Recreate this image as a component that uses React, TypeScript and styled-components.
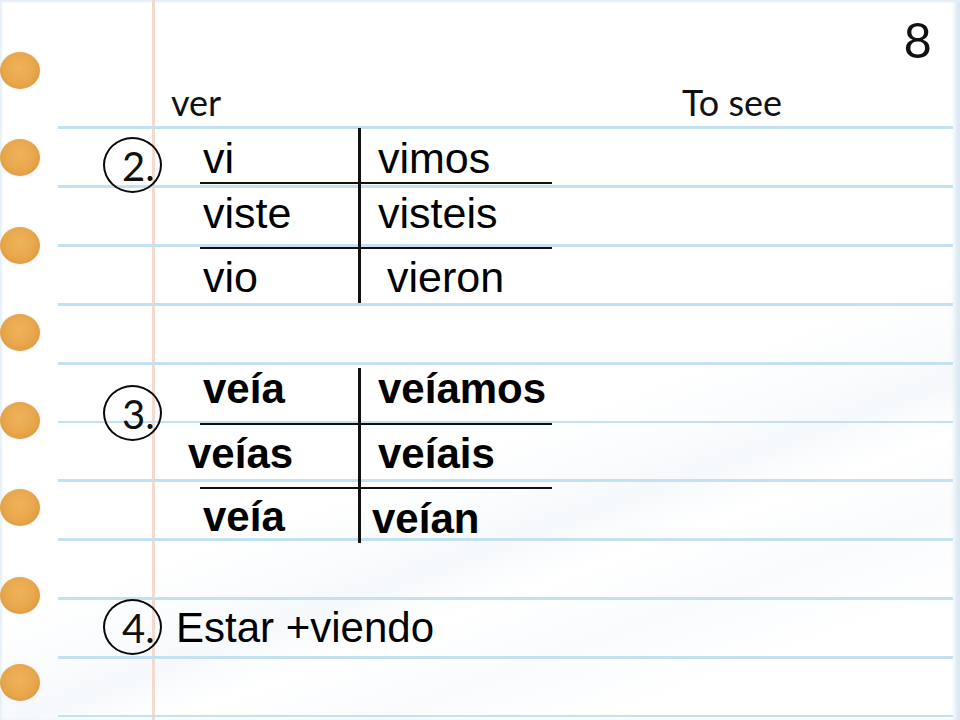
import React from "react";
import styled, { createGlobalStyle } from "styled-components";

const GlobalStyle = createGlobalStyle`
  html, body { margin: 0; padding: 0; background: #ffffff; }
  * { box-sizing: border-box; }
`;

const Page = styled.div`
  width: 960px;
  height: 720px;
  overflow: hidden;
  display: flex;
  background:
    linear-gradient(160deg, rgba(255,255,255,0) 58%, rgba(232,240,246,0.4) 68%, rgba(255,255,255,0) 73%, rgba(234,241,247,0.3) 80%, rgba(255,255,255,0) 88%),
    #ffffff;
  box-shadow: inset 0 3px 2px -1px #e4eef6, inset -7px 0 5px -2px #d9e8f2, inset 3px 0 2px -1px #e8f1f8;
`;

const Binding = styled.div`
  width: 58px;
  flex-shrink: 0;
  display: flex;
  flex-direction: column;
  padding-top: 51.5px;
  gap: 50.5px;
`;

const Ring = styled.div`
  width: 40px;
  height: 37px;
  border-radius: 50%;
  background: radial-gradient(ellipse at 48% 42%, #eeb35c 0%, #e8a64b 55%, #d7933d 88%, #cf8a36 100%);
  box-shadow: 0 0 3px 1px rgba(235, 244, 250, 0.9);
`;

const Sheet = styled.div`
  flex: 1;
  margin-right: 7px;
  display: flex;
  flex-direction: column;
  background: linear-gradient(
    to right,
    transparent 0,
    transparent 94px,
    #f6d9cd 94px,
    #f6d9cd 97px,
    transparent 97px
  );
`;

const Header = styled.div`
  height: 120px;
  display: flex;
  flex-direction: column;
  font-family: Lato, "Open Sans", sans-serif;
  color: #111;
`;

const PageNumber = styled.div`
  align-self: flex-end;
  margin-top: 15px;
  margin-right: 21px;
  font-size: 49px;
  line-height: 48px;
`;

const TitleRow = styled.div`
  display: grid;
  grid-template-columns: 511px auto;
  padding-left: 113px;
  margin-top: 21px;
  font-size: 36px;
  line-height: 36px;
`;

const Body = styled.div`
  flex: 1;
  padding-top: 8px;
  display: flex;
  flex-direction: column;
  background: repeating-linear-gradient(
    to bottom,
    transparent 0px,
    transparent 6.5px,
    #c3e1f0 6.5px,
    #c3e1f0 9.5px,
    transparent 9.5px,
    transparent 58.8px
  );
`;

const Section = styled.div<{ $mt: number; $center?: boolean }>`
  display: flex;
  align-items: ${(p) => (p.$center ? "center" : "flex-start")};
  padding-left: 45px;
  margin-top: ${(p) => p.$mt}px;
`;

const Badge = styled.div<{ $mt?: number }>`
  width: 59px;
  height: 56px;
  flex-shrink: 0;
  margin-top: ${(p) => p.$mt ?? 0}px;
  border: 2.5px solid #0a0a0a;
  border-radius: 50%;
  display: flex;
  align-items: center;
  padding-left: 17px;
  padding-top: 1px;
  font-family: Lato, "Open Sans", sans-serif;
  font-size: 40px;
  line-height: 40px;
  color: #111;
  white-space: nowrap;
`;

const Table = styled.div<{ $rows: string; $bold?: boolean }>`
  margin-left: 38px;
  display: grid;
  grid-template-columns: 161px 191px;
  grid-template-rows: ${(p) => p.$rows};
  font-family: "Liberation Sans", Arial, sans-serif;
  font-weight: ${(p) => (p.$bold ? 700 : 400)};
  font-size: ${(p) => (p.$bold ? 42 : 43)}px;
  line-height: ${(p) => (p.$bold ? 42 : 43)}px;
  color: #000;
`;

const Cell = styled.div<{ $right?: boolean; $last?: boolean; $pt: number; $pl?: number }>`
  white-space: nowrap;
  padding-top: ${(p) => p.$pt}px;
  padding-left: ${(p) => p.$pl ?? (p.$right ? 17 : 3)}px;
  border-right: ${(p) => (p.$right ? "none" : "3px solid #111")};
  border-bottom: ${(p) => (p.$last ? "none" : "2px solid #111")};
`;

const Shifted = styled.span<{ $shift: number }>`
  display: inline-block;
  margin-left: ${(p) => p.$shift}px;
`;

const Phrase = styled.div`
  margin-left: 14px;
  padding-top: 2px;
  font-family: "Liberation Sans", Arial, sans-serif;
  font-size: 42px;
  line-height: 42px;
  color: #000;
`;

type Row = { l: string; r: string; pt: number; lshift?: number; rpl?: number; rpt?: number };

const preterite: Row[] = [
  { l: "vi", r: "vimos", pt: 9 },
  { l: "viste", r: "visteis", pt: 8 },
  { l: "vio", r: "vieron", pt: 7, rpl: 26 },
];

const imperfect: Row[] = [
  { l: "veía", r: "veíamos", pt: 0 },
  { l: "veías", r: "veíais", pt: 8, lshift: -15 },
  { l: "veía", r: "veían", pt: 7, rpl: 11, rpt: 9 },
];

const Conjugation: React.FC<{ rows: Row[]; heights: string; bold?: boolean }> = ({ rows, heights, bold }) => (
  <Table $rows={heights} $bold={bold}>
    {rows.map((row, i) => {
      const last = i === rows.length - 1;
      return (
        <React.Fragment key={i}>
          <Cell $last={last} $pt={row.pt}>
            {row.lshift !== undefined ? <Shifted $shift={row.lshift}>{row.l}</Shifted> : row.l}
          </Cell>
          <Cell $right $last={last} $pt={row.rpt ?? row.pt} $pl={row.rpl}>
            {row.r}
          </Cell>
        </React.Fragment>
      );
    })}
  </Table>
);

export default function App() {
  return (
    <>
      <GlobalStyle />
      <Page>
        <Binding>
          {Array.from({ length: 8 }).map((_, i) => (
            <Ring key={i} />
          ))}
        </Binding>
        <Sheet>
          <Header>
            <PageNumber>8</PageNumber>
            <TitleRow>
              <span>ver</span>
              <span>To see</span>
            </TitleRow>
          </Header>
          <Body>
            <Section $mt={0}>
              <Badge $mt={9}>2.</Badge>
              <Conjugation rows={preterite} heights="56px 65px 54px" />
            </Section>
            <Section $mt={65}>
              <Badge $mt={17}>3.</Badge>
              <Conjugation rows={imperfect} heights="57px 64px 54px" bold />
            </Section>
            <Section $mt={56} $center>
              <Badge>4.</Badge>
              <Phrase>Estar +viendo</Phrase>
            </Section>
          </Body>
        </Sheet>
      </Page>
    </>
  );
}
